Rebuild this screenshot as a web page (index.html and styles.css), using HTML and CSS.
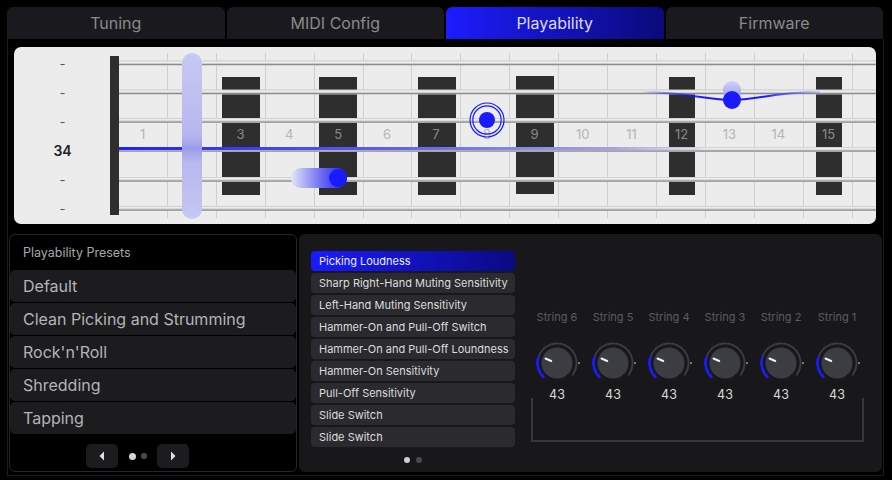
FILE: index.html
```html
<!DOCTYPE html>
<html>
<head>
<meta charset="utf-8">
<link rel="stylesheet" href="styles.css">
</head>
<body>
<div class="app">
  <nav class="tabs">
    <div class="tab">Tuning</div>
    <div class="tab">MIDI Config</div>
    <div class="tab active">Playability</div>
    <div class="tab">Firmware</div>
  </nav>
  <div class="frame">
    <section class="board">
      <div class="gauge">
        <span>-</span><span>-</span><span>-</span><span class="val">34</span><span>-</span><span>-</span>
      </div>
      <svg class="neck" width="766" height="177" viewBox="0 0 766 177">
        <defs>
          <linearGradient id="str" x1="0" y1="0" x2="0" y2="1">
            <stop offset="0" stop-color="#c4c4c4"/>
            <stop offset="0.35" stop-color="#f4f4f4"/>
            <stop offset="0.6" stop-color="#cdcdcd"/>
            <stop offset="0.8" stop-color="#8c8c8c"/>
            <stop offset="1" stop-color="#bcbcbc"/>
          </linearGradient>
          <linearGradient id="blue" gradientUnits="userSpaceOnUse" x1="9" y1="0" x2="590" y2="0">
            <stop offset="0" stop-color="#2020ff"/>
            <stop offset="0.45" stop-color="#5c5cf2"/>
            <stop offset="0.85" stop-color="#a6a2e2"/>
            <stop offset="1" stop-color="#b8b8e8" stop-opacity="0.2"/>
          </linearGradient>
          <linearGradient id="cap" x1="0" y1="0" x2="0" y2="1">
            <stop offset="0" stop-color="#c8c8f4"/>
            <stop offset="0.3" stop-color="#bebef0"/>
            <stop offset="0.5" stop-color="#b6b6ee"/>
            <stop offset="0.575" stop-color="#9c9ce8"/>
            <stop offset="0.66" stop-color="#b8b8ef"/>
            <stop offset="0.8" stop-color="#bdbdf0"/>
            <stop offset="1" stop-color="#c8c8f4"/>
          </linearGradient>
          <linearGradient id="slide" x1="0" y1="0" x2="1" y2="0">
            <stop offset="0" stop-color="#e6e6f6"/>
            <stop offset="0.55" stop-color="#6a6af4"/>
            <stop offset="1" stop-color="#1a1aff"/>
          </linearGradient>
          <linearGradient id="bend" gradientUnits="userSpaceOnUse" x1="530" y1="0" x2="710" y2="0">
            <stop offset="0" stop-color="#1a1aff" stop-opacity="0"/>
            <stop offset="0.35" stop-color="#1a1aff"/>
            <stop offset="0.7" stop-color="#1a1aff"/>
            <stop offset="1" stop-color="#6e6eff" stop-opacity="0.25"/>
          </linearGradient>
          <linearGradient id="bendcap" x1="0" y1="0" x2="0" y2="1">
            <stop offset="0" stop-color="#d2d2f6"/>
            <stop offset="1" stop-color="#9494f0"/>
          </linearGradient>
        </defs>

        <g stroke="#cfcfcf" stroke-width="1">
          <line x1="57.5" y1="6" x2="57.5" y2="171"/>
          <line x1="106.5" y1="6" x2="106.5" y2="171"/>
          <line x1="155.5" y1="6" x2="155.5" y2="171"/>
          <line x1="204.5" y1="6" x2="204.5" y2="171"/>
          <line x1="253.5" y1="6" x2="253.5" y2="171"/>
          <line x1="301.5" y1="6" x2="301.5" y2="171"/>
          <line x1="350.5" y1="6" x2="350.5" y2="171"/>
          <line x1="399.5" y1="6" x2="399.5" y2="171"/>
          <line x1="448.5" y1="6" x2="448.5" y2="171"/>
          <line x1="497.5" y1="6" x2="497.5" y2="171"/>
          <line x1="546.5" y1="6" x2="546.5" y2="171"/>
          <line x1="595.5" y1="6" x2="595.5" y2="171"/>
          <line x1="644.5" y1="6" x2="644.5" y2="171"/>
          <line x1="693.5" y1="6" x2="693.5" y2="171"/>
          <line x1="742.5" y1="6" x2="742.5" y2="171"/>
        </g>

        <g fill="#2e2e2e">
          <rect x="112" y="30" width="38" height="118"/>
          <rect x="209" y="30" width="38" height="118"/>
          <rect x="308" y="30" width="38" height="118"/>
          <rect x="406" y="29" width="38" height="118"/>
          <rect x="559" y="30" width="26" height="118"/>
          <rect x="706" y="30" width="26" height="118"/>
        </g>

        <g font-family="Inter, 'Noto Sans', sans-serif" font-size="13" text-anchor="middle" fill="#b4b4b4">
          <text x="32.6" y="92">1</text>
          <text x="130.4" y="92" fill="#8a8a8a">3</text>
          <text x="179.3" y="92">4</text>
          <text x="228.2" y="92" fill="#8a8a8a">5</text>
          <text x="277" y="92">6</text>
          <text x="326" y="92" fill="#8a8a8a">7</text>
          <text x="424.5" y="92" fill="#8a8a8a">9</text>
          <text x="472.7" y="92">10</text>
          <text x="521.6" y="92">11</text>
          <text x="571.5" y="92" fill="#8a8a8a">12</text>
          <text x="619.4" y="92">13</text>
          <text x="668.3" y="92">14</text>
          <text x="718.5" y="92" fill="#8a8a8a">15</text>
        </g>

        <g fill="url(#str)">
          <rect x="9" y="13.5" width="757" height="5"/>
          <rect x="9" y="42.5" width="757" height="5"/>
          <rect x="9" y="71" width="757" height="5"/>
          <rect x="9" y="100" width="757" height="5"/>
          <rect x="9" y="130" width="757" height="5"/>
          <rect x="9" y="159" width="757" height="5"/>
        </g>

        <rect x="0" y="9" width="9" height="159" fill="#2e2e2e"/>

        <rect x="9" y="100" width="581" height="3" fill="url(#blue)"/>

        <rect x="72" y="6" width="20" height="166" rx="10" fill="url(#cap)"/>

        <text x="377" y="92" font-family="Inter, 'Noto Sans', sans-serif" font-size="13" text-anchor="middle" fill="#b4b4b4">8</text>
        <circle cx="377" cy="73" r="17" fill="none" stroke="#1a1aff" stroke-width="1.2"/>
        <circle cx="377" cy="73" r="14.2" fill="none" stroke="#1a1aff" stroke-width="1.2"/>
        <circle cx="377" cy="73" r="8" fill="#1a1aff"/>

        <rect x="181" y="121" width="56" height="20" rx="10" fill="url(#slide)"/>
        <circle cx="228" cy="131" r="9" fill="#1a1aff"/>

        <path d="M530 45 C575 45 598 53 622 53 C646 53 664 45 710 45" fill="none" stroke="url(#bend)" stroke-width="2"/>
        <rect x="613" y="34" width="18" height="20" rx="9" fill="url(#bendcap)"/>
        <circle cx="622" cy="53" r="9" fill="#1a1aff"/>
      </svg>
    </section>

    <div class="lower">
      <aside class="presets">
        <h2 class="ptitle">Playability Presets</h2>
        <div class="preset-list">
          <div class="preset">Default</div>
          <div class="preset">Clean Picking and Strumming</div>
          <div class="preset">Rock'n'Roll</div>
          <div class="preset">Shredding</div>
          <div class="preset">Tapping</div>
        </div>
        <div class="pager">
          <div class="pbtn">
            <svg width="8" height="10" viewBox="0 0 8 10"><path d="M6 0.5 L1.5 5 L6 9.5 Z" fill="#e0e0e0"/></svg>
          </div>
          <div class="pdots"><span class="dot on"></span><span class="dot"></span></div>
          <div class="pbtn">
            <svg width="8" height="10" viewBox="0 0 8 10"><path d="M2 0.5 L6.5 5 L2 9.5 Z" fill="#e0e0e0"/></svg>
          </div>
        </div>
      </aside>

      <section class="params">
        <div class="pcol">
          <div class="plist">
            <div class="pitem active">Picking Loudness</div>
            <div class="pitem">Sharp Right-Hand Muting Sensitivity</div>
            <div class="pitem">Left-Hand Muting Sensitivity</div>
            <div class="pitem">Hammer-On and Pull-Off Switch</div>
            <div class="pitem">Hammer-On and Pull-Off Loundness</div>
            <div class="pitem">Hammer-On Sensitivity</div>
            <div class="pitem">Pull-Off Sensitivity</div>
            <div class="pitem">Slide Switch</div>
            <div class="pitem">Slide Switch</div>
          </div>
          <div class="ldots"><span class="ldot on"></span><span class="ldot"></span></div>
        </div>

        <div class="knobs">
          <div class="knob-row">
            <div class="knob">
              <span class="lbl">String 6</span>
              <svg width="50" height="50" viewBox="0 0 50 50"><path d="M12.2 39.7 A19.5 19.5 0 1 1 40.2 37.3" fill="none" stroke="#3a3a40" stroke-width="2"/><path d="M12.2 39.7 A19.5 19.5 0 0 1 6.6 18.6" fill="none" stroke="#1a1aff" stroke-width="2.6"/><circle cx="25" cy="25" r="15.5" fill="#3c3c43"/><rect x="46" y="24" width="2" height="2" fill="#77777d"/><line x1="13.5" y1="20.5" x2="19.2" y2="23" stroke="#f0f0f0" stroke-width="2" stroke-linecap="round"/></svg>
              <span class="num">43</span>
            </div>
            <div class="knob">
              <span class="lbl">String 5</span>
              <svg width="50" height="50" viewBox="0 0 50 50"><path d="M12.2 39.7 A19.5 19.5 0 1 1 40.2 37.3" fill="none" stroke="#3a3a40" stroke-width="2"/><path d="M12.2 39.7 A19.5 19.5 0 0 1 6.6 18.6" fill="none" stroke="#1a1aff" stroke-width="2.6"/><circle cx="25" cy="25" r="15.5" fill="#3c3c43"/><rect x="46" y="24" width="2" height="2" fill="#77777d"/><line x1="13.5" y1="20.5" x2="19.2" y2="23" stroke="#f0f0f0" stroke-width="2" stroke-linecap="round"/></svg>
              <span class="num">43</span>
            </div>
            <div class="knob">
              <span class="lbl">String 4</span>
              <svg width="50" height="50" viewBox="0 0 50 50"><path d="M12.2 39.7 A19.5 19.5 0 1 1 40.2 37.3" fill="none" stroke="#3a3a40" stroke-width="2"/><path d="M12.2 39.7 A19.5 19.5 0 0 1 6.6 18.6" fill="none" stroke="#1a1aff" stroke-width="2.6"/><circle cx="25" cy="25" r="15.5" fill="#3c3c43"/><rect x="46" y="24" width="2" height="2" fill="#77777d"/><line x1="13.5" y1="20.5" x2="19.2" y2="23" stroke="#f0f0f0" stroke-width="2" stroke-linecap="round"/></svg>
              <span class="num">43</span>
            </div>
            <div class="knob">
              <span class="lbl">String 3</span>
              <svg width="50" height="50" viewBox="0 0 50 50"><path d="M12.2 39.7 A19.5 19.5 0 1 1 40.2 37.3" fill="none" stroke="#3a3a40" stroke-width="2"/><path d="M12.2 39.7 A19.5 19.5 0 0 1 6.6 18.6" fill="none" stroke="#1a1aff" stroke-width="2.6"/><circle cx="25" cy="25" r="15.5" fill="#3c3c43"/><rect x="46" y="24" width="2" height="2" fill="#77777d"/><line x1="13.5" y1="20.5" x2="19.2" y2="23" stroke="#f0f0f0" stroke-width="2" stroke-linecap="round"/></svg>
              <span class="num">43</span>
            </div>
            <div class="knob">
              <span class="lbl">String 2</span>
              <svg width="50" height="50" viewBox="0 0 50 50"><path d="M12.2 39.7 A19.5 19.5 0 1 1 40.2 37.3" fill="none" stroke="#3a3a40" stroke-width="2"/><path d="M12.2 39.7 A19.5 19.5 0 0 1 6.6 18.6" fill="none" stroke="#1a1aff" stroke-width="2.6"/><circle cx="25" cy="25" r="15.5" fill="#3c3c43"/><rect x="46" y="24" width="2" height="2" fill="#77777d"/><line x1="13.5" y1="20.5" x2="19.2" y2="23" stroke="#f0f0f0" stroke-width="2" stroke-linecap="round"/></svg>
              <span class="num">43</span>
            </div>
            <div class="knob">
              <span class="lbl">String 1</span>
              <svg width="50" height="50" viewBox="0 0 50 50"><path d="M12.2 39.7 A19.5 19.5 0 1 1 40.2 37.3" fill="none" stroke="#3a3a40" stroke-width="2"/><path d="M12.2 39.7 A19.5 19.5 0 0 1 6.6 18.6" fill="none" stroke="#1a1aff" stroke-width="2.6"/><circle cx="25" cy="25" r="15.5" fill="#3c3c43"/><rect x="46" y="24" width="2" height="2" fill="#77777d"/><line x1="13.5" y1="20.5" x2="19.2" y2="23" stroke="#f0f0f0" stroke-width="2" stroke-linecap="round"/></svg>
              <span class="num">43</span>
            </div>
          </div>
          <div class="bracket"></div>
        </div>
      </section>
    </div>
  </div>
</div>
</body>
</html>
```
FILE: styles.css
```css
* { box-sizing: border-box; }

body {
  margin: 0;
  background: #000;
  font-family: Inter, "Noto Sans", sans-serif;
  width: 892px;
  height: 480px;
  overflow: hidden;
}

.app {
  padding: 7px 0 0 7px;
}

.tabs {
  display: grid;
  grid-template-columns: repeat(4, 1fr);
  gap: 2px;
  width: 876px;
  height: 32px;
}

.tab {
  background: #1a1a1e;
  border-radius: 6px 6px 0 0;
  color: #8a8a8a;
  font-size: 16px;
  display: flex;
  align-items: center;
  justify-content: center;
}

.tab.active {
  background: linear-gradient(90deg, #1c1cff 0%, #0a0a7a 100%);
  color: #dcdcf4;
}

.frame {
  width: 877px;
  height: 437px;
  border: 1px solid #1c1c20;
  border-top: 0;
  padding-top: 8px;
}

.board {
  display: flex;
  width: 862px;
  height: 177px;
  margin-left: 6px;
  background: #ececec;
  border-radius: 7px;
  overflow: hidden;
}

.gauge {
  width: 97px;
  flex: none;
  display: flex;
  flex-direction: column;
  padding-top: 2px;
}

.gauge span {
  height: 29px;
  display: flex;
  align-items: center;
  justify-content: center;
  color: #5a5a5a;
  font-size: 13px;
}

.gauge .val {
  color: #222;
  font-size: 14px;
  font-weight: 600;
}

.neck {
  display: block;
  flex: none;
  margin-left: -1px;
}

.lower {
  display: flex;
  gap: 2px;
  margin: 10px 1px 0 1px;
  height: 238px;
}

.presets {
  width: 288px;
  flex: none;
  border: 1px solid #26262a;
  border-radius: 6px;
  background: #000;
  display: flex;
  flex-direction: column;
}

.ptitle {
  margin: 0;
  height: 35px;
  padding-left: 13px;
  font-size: 12.5px;
  font-weight: 400;
  color: #a8a8a8;
  display: flex;
  align-items: center;
}

.preset-list {
  display: flex;
  flex-direction: column;
  gap: 1px;
}

.preset {
  height: 32px;
  background: #1c1c1f;
  border-radius: 5px;
  color: #b4b4b4;
  font-size: 16px;
  padding-left: 13px;
  display: flex;
  align-items: center;
}

.pager {
  display: flex;
  align-items: center;
  margin: 10px 0 0 76px;
}

.pbtn {
  width: 32px;
  height: 24px;
  background: #1c1c1f;
  border-radius: 5px;
  display: flex;
  align-items: center;
  justify-content: center;
}

.pdots {
  width: 39px;
  display: flex;
  justify-content: center;
  align-items: center;
  gap: 5px;
}

.dot {
  width: 6px;
  height: 6px;
  border-radius: 50%;
  background: #4a4a4e;
}

.dot.on {
  width: 7px;
  height: 7px;
  background: #d4d4d4;
}

.params {
  flex: 1;
  background: #18181b;
  border-radius: 6px;
  display: flex;
  padding: 17px 0 0 12px;
}

.pcol {
  width: 204px;
  flex: none;
}

.plist {
  display: flex;
  flex-direction: column;
  gap: 2px;
}

.pitem {
  height: 20px;
  background: #2b2b2f;
  border-radius: 4px;
  font-size: 11px;
  color: #dcdcdc;
  padding-left: 8px;
  display: flex;
  align-items: center;
  white-space: nowrap;
}

.pitem.active {
  background: linear-gradient(90deg, #1a1aff 0%, #0a0a82 100%);
  color: #ececff;
}

.ldots {
  display: flex;
  justify-content: center;
  gap: 6px;
  margin-top: 10px;
}

.ldot {
  width: 6px;
  height: 6px;
  border-radius: 50%;
  background: #4a4a50;
}

.ldot.on {
  background: #d0d0d0;
}

.knobs {
  margin: 59px 0 0 14px;
}

.knob-row {
  display: flex;
}

.knob {
  width: 56px;
  display: flex;
  flex-direction: column;
  align-items: center;
}

.knob .lbl {
  font-size: 11px;
  line-height: 14px;
  color: #5c5c62;
  white-space: nowrap;
}

.knob svg {
  display: block;
  margin-top: 14px;
}

.knob .num {
  font-size: 12.5px;
  line-height: 14px;
  color: #d8d8d8;
}

.bracket {
  width: 333px;
  height: 44px;
  margin: -4px 0 0 2px;
  border: 2px solid #36363b;
  border-top: 0;
}
```
